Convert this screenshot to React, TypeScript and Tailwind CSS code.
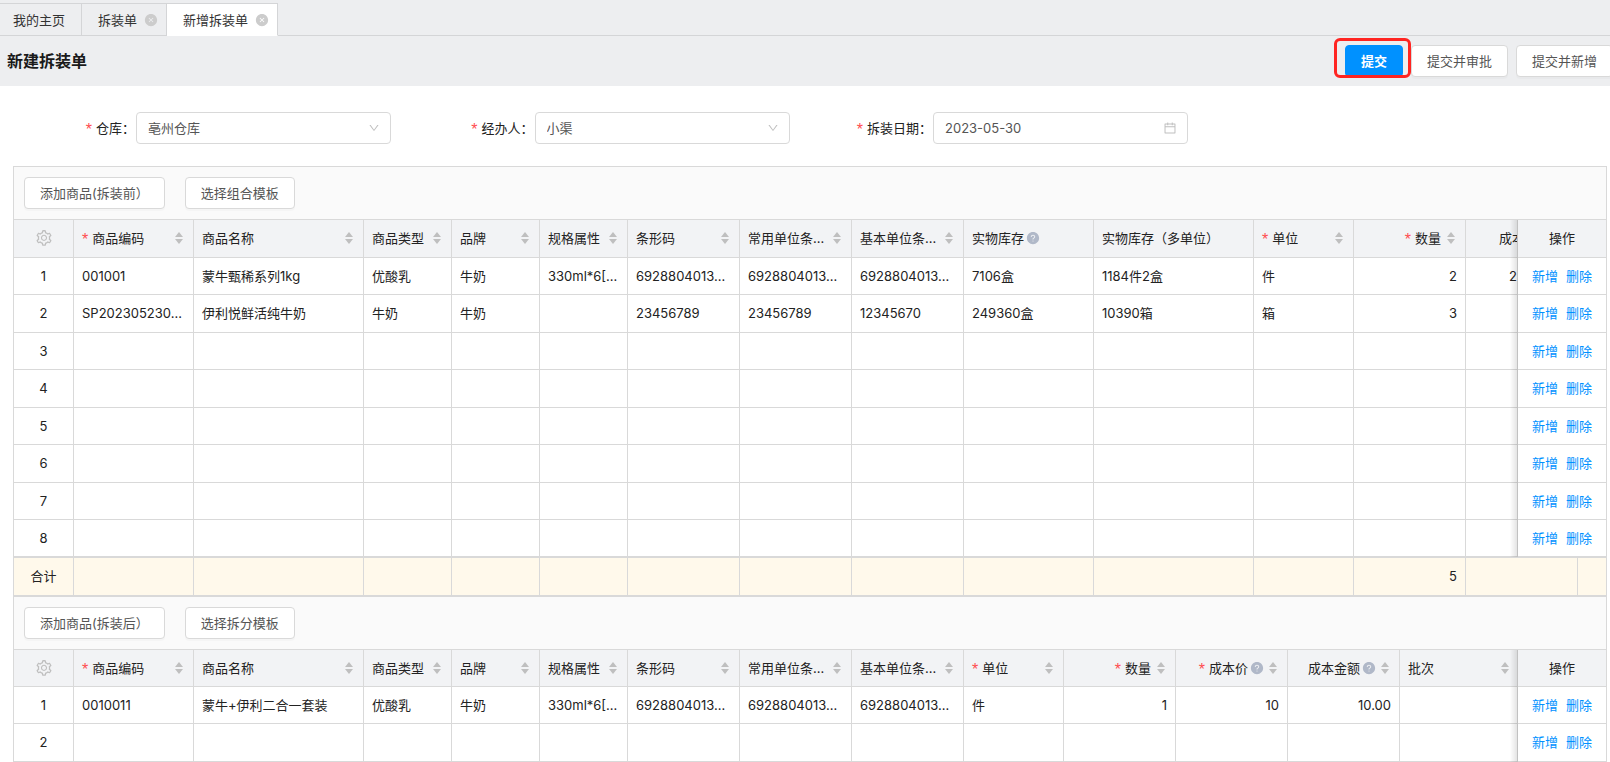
import React from 'react';
import {
  AiFillCloseCircle,
  AiFillQuestionCircle,
  AiOutlineCalendar,
  AiOutlineDown,
  AiOutlineSetting,
} from 'react-icons/ai';

interface Column {
  key: string;
  title: string;
  width: number;
  required?: boolean;
  help?: boolean;
  sortable?: boolean;
  right?: boolean;
  boxed?: boolean;
}

type Row = Record<string, string>;

const baseColumns: Column[] = [
  { key: 'code', title: '商品编码', width: 120, required: true, sortable: true },
  { key: 'name', title: '商品名称', width: 170, sortable: true },
  { key: 'type', title: '商品类型', width: 88, sortable: true },
  { key: 'brand', title: '品牌', width: 88, sortable: true },
  { key: 'spec', title: '规格属性', width: 88, sortable: true },
  { key: 'barcode', title: '条形码', width: 112, sortable: true },
  { key: 'commonBarcode', title: '常用单位条...', width: 112, sortable: true },
  { key: 'baseBarcode', title: '基本单位条...', width: 112, sortable: true },
];

const beforeColumns: Column[] = [
  ...baseColumns,
  { key: 'stock', title: '实物库存', width: 130, help: true },
  { key: 'multiStock', title: '实物库存（多单位）', width: 160 },
  { key: 'unit', title: '单位', width: 100, required: true, sortable: true },
  { key: 'qty', title: '数量', width: 112, required: true, sortable: true, right: true },
  { key: 'cost', title: '成本价', width: 112, help: true, sortable: true, right: true, boxed: true },
  { key: 'extra', title: '', width: 120 },
];

const afterColumns: Column[] = [
  ...baseColumns,
  { key: 'unit', title: '单位', width: 100, required: true, sortable: true },
  { key: 'qty', title: '数量', width: 112, required: true, sortable: true, right: true },
  { key: 'cost', title: '成本价', width: 112, required: true, help: true, sortable: true, right: true },
  { key: 'amount', title: '成本金额', width: 112, help: true, sortable: true, right: true },
  { key: 'batch', title: '批次', width: 120, sortable: true },
  { key: 'extra', title: '', width: 120 },
];

const beforeRows: Row[] = [
  {
    code: '001001',
    name: '蒙牛甄稀系列1kg',
    type: '优酸乳',
    brand: '牛奶',
    spec: '330ml*6[...',
    barcode: '6928804013...',
    commonBarcode: '6928804013...',
    baseBarcode: '6928804013...',
    stock: '7106盒',
    multiStock: '1184件2盒',
    unit: '件',
    qty: '2',
    cost: '2',
  },
  {
    code: 'SP202305230...',
    name: '伊利悦鲜活纯牛奶',
    type: '牛奶',
    brand: '牛奶',
    barcode: '23456789',
    commonBarcode: '23456789',
    baseBarcode: '12345670',
    stock: '249360盒',
    multiStock: '10390箱',
    unit: '箱',
    qty: '3',
  },
  {}, {}, {}, {}, {}, {},
];

const afterRows: Row[] = [
  {
    code: '0010011',
    name: '蒙牛+伊利二合一套装',
    type: '优酸乳',
    brand: '牛奶',
    spec: '330ml*6[...',
    barcode: '6928804013...',
    commonBarcode: '6928804013...',
    baseBarcode: '6928804013...',
    unit: '件',
    qty: '1',
    cost: '10',
    amount: '10.00',
  },
  {},
];

const Required = () => (
  <span className="mr-1 shrink-0 pt-1 font-['Liberation_Sans',sans-serif] text-base leading-4 text-[#ff4d4f]">*</span>
);

const SortIcon = () => (
  <svg viewBox="0 0 8 12" className="ml-1.5 mr-0.5 h-3 w-2 shrink-0 fill-[#bfbfbf]">
    <path d="M4 0 L8 5 H0 Z" />
    <path d="M0 7 H8 L4 12 Z" />
  </svg>
);

const Button = ({ children, primary }: { children: React.ReactNode; primary?: boolean }) => (
  <button
    type="button"
    className={
      primary
        ? 'h-8 shrink-0 whitespace-nowrap rounded border border-[#0091ff] bg-[#0091ff] px-[15px] font-bold text-white'
        : 'h-8 shrink-0 whitespace-nowrap rounded border border-[#d9d9d9] bg-white px-[15px] text-[#555] shadow-[0_2px_0_rgba(0,0,0,0.02)]'
    }
  >
    {children}
  </button>
);

const Tab = ({ title, active, closable }: { title: string; active?: boolean; closable?: boolean }) => (
  <div
    className={`flex h-[33px] items-center border-b border-r border-t border-[#d4d5d7] ${
      active ? 'border-b-white bg-white' : ''
    } ${closable ? 'pl-4 pr-2' : 'pl-[13px] pr-4'}`}
  >
    <button type="button" className="text-[#333]">{title}</button>
    {closable && (
      <button type="button" aria-label={`关闭${title}`} className="ml-[7px]">
        <AiFillCloseCircle className="h-3.5 w-3.5 text-[#ccc]" />
      </button>
    )}
  </div>
);

const Field = ({ id, label, children }: { id: string; label: string; children: React.ReactNode }) => (
  <div className="flex items-center">
    <label htmlFor={id} className="flex w-32 shrink-0 items-center justify-end pr-px text-[#222]">
      <Required />
      {label}：
    </label>
    <div className="relative w-[255px]">{children}</div>
  </div>
);

const inputClass =
  'h-8 w-full appearance-none rounded border border-[#d9d9d9] bg-white px-[11px] text-[#555] outline-none';

const SelectBox = ({ id, value }: { id: string; value: string }) => (
  <>
    <select id={id} className={inputClass} defaultValue={value}>
      <option>{value}</option>
    </select>
    <AiOutlineDown className="pointer-events-none absolute right-[11px] top-2.5 h-3 w-3 text-[#bfbfbf]" />
  </>
);

interface GridProps {
  columns: Column[];
  rows: Row[];
  total?: Row;
  headClass: string;
}

const cellClass = 'border-b border-r border-[#d9d9d9] pb-px';
// action column stays in view and throws a soft shade on the cells at its left
const fixedClass =
  "sticky right-0 z-10 border-b border-l border-[#d9d9d9] pb-px before:pointer-events-none before:absolute before:top-0 before:-bottom-px before:right-full before:w-2 before:bg-linear-to-l before:from-black/12 before:to-transparent before:content-['']";

const ProductGrid = ({ columns, rows, total, headClass }: GridProps) => {
  const width = columns.reduce((sum, c) => sum + c.width, 60 + 89);

  return (
    <div className="overflow-x-auto overflow-y-hidden [scrollbar-width:none]">
      <table className="table-fixed border-separate border-spacing-0 text-[#222]" style={{ width }}>
        <colgroup>
          <col className="w-[60px]" />
          {columns.map(c => <col key={c.key} style={{ width: c.width }} />)}
          <col className="w-[89px]" />
        </colgroup>
        <thead>
          <tr className={headClass}>
            <th className={`${cellClass} bg-[#f2f3f5]`}>
              <button type="button" aria-label="列设置" className="mx-auto block">
                <AiOutlineSetting className="h-[18px] w-[18px] text-[#bfbfbf]" />
              </button>
            </th>
            {columns.map(c => (
              <th key={c.key} className={`${cellClass} bg-[#f2f3f5] px-2 font-normal`}>
                <div className="flex items-center">
                  <div className={`flex min-w-0 flex-1 items-center ${c.right ? 'justify-end' : ''}`}>
                    {c.required && <Required />}
                    <span className="truncate">{c.title}</span>
                    {c.help && <AiFillQuestionCircle className="-mr-px ml-0.5 h-3.5 w-3.5 shrink-0 text-[#b0b8c8]" />}
                  </div>
                  {c.sortable && <SortIcon />}
                </div>
              </th>
            ))}
            <th className={`${fixedClass} bg-[#f2f3f5] font-normal`}>操作</th>
          </tr>
        </thead>
        <tbody className={total ? '[&>tr:last-child>td]:border-b-2' : ''}>
          {rows.map((row, i) => (
            <tr key={i} className="h-[37px] even:h-[38px]">
              <td className={`${cellClass} text-center`}>{i + 1}</td>
              {columns.map(c => (
                <td key={c.key} className={`${cellClass} truncate px-2 ${c.right ? 'text-right' : ''}`}>
                  {c.boxed ? <div className="ml-auto w-[60px] text-left">{row[c.key]}</div> : row[c.key]}
                </td>
              ))}
              <td className={`${fixedClass} bg-white`}>
                <div className="flex justify-center gap-2 text-[#0091ff]">
                  <button type="button">新增</button>
                  <button type="button">删除</button>
                </div>
              </td>
            </tr>
          ))}
        </tbody>
        {total && (
          <tfoot>
            <tr className="h-[38px] bg-[#fff9eb]">
              <td className={`${cellClass} text-center`}>合计</td>
              {columns.map(c => (
                <td key={c.key} className={`${cellClass} px-2 ${c.right ? 'text-right' : ''}`}>
                  {total[c.key]}
                </td>
              ))}
              <td className={cellClass} />
            </tr>
          </tfoot>
        )}
      </table>
    </div>
  );
};

const Toolbar = ({ children }: { children: React.ReactNode }) => (
  <div className="flex gap-5 border-y border-[#d9d9d9] bg-[#fafafa] p-2.5">{children}</div>
);

const App = () => {
  return (
    <div className="overflow-hidden bg-white font-['Inter','Noto_Sans_CJK_SC',sans-serif] text-[13px] leading-5">
      <nav className="flex bg-[#edeef0] pt-[3px]">
        <Tab title="我的主页" />
        <Tab title="拆装单" closable />
        <Tab title="新增拆装单" closable active />
        <div className="flex-1 border-b border-[#d4d5d7]" />
      </nav>

      <header className="flex h-[50px] items-center justify-between bg-[#edeef0] pl-[7px]">
        <h1 className="text-base font-bold text-[#1a1a1a]">新建拆装单</h1>
        <div className="-mr-[3px] flex gap-2">
          <div className="relative">
            <Button primary>提交</Button>
            {/* highlight frame around the submit action */}
            <div className="pointer-events-none absolute -bottom-px -left-[11px] -right-2 -top-[7px] rounded-md border-3 border-[#ff2522]" />
          </div>
          <Button>提交并审批</Button>
          <Button>提交并新增</Button>
        </div>
      </header>

      <form className="grid grid-cols-4 px-2 pb-[22px] pt-[26px]">
        <Field id="warehouse" label="仓库">
          <SelectBox id="warehouse" value="亳州仓库" />
        </Field>
        <Field id="handler" label="经办人">
          <SelectBox id="handler" value="小渠" />
        </Field>
        <Field id="date" label="拆装日期">
          <input id="date" type="text" className={inputClass} defaultValue="2023-05-30" />
          <AiOutlineCalendar className="pointer-events-none absolute right-[11px] top-[9px] h-3.5 w-3.5 text-[#bfbfbf]" />
        </Field>
      </form>

      <main className="ml-[13px] mr-[3px] border-x border-[#d9d9d9]">
        <section>
          <Toolbar>
            <Button>添加商品(拆装前）</Button>
            <Button>选择组合模板</Button>
          </Toolbar>
          <ProductGrid columns={beforeColumns} rows={beforeRows} total={{ qty: '5' }} headClass="h-[38px]" />
        </section>
        <section>
          <Toolbar>
            <Button>添加商品(拆装后）</Button>
            <Button>选择拆分模板</Button>
          </Toolbar>
          <ProductGrid columns={afterColumns} rows={afterRows} headClass="h-[37px]" />
        </section>
      </main>
    </div>
  );
};

export default App;
